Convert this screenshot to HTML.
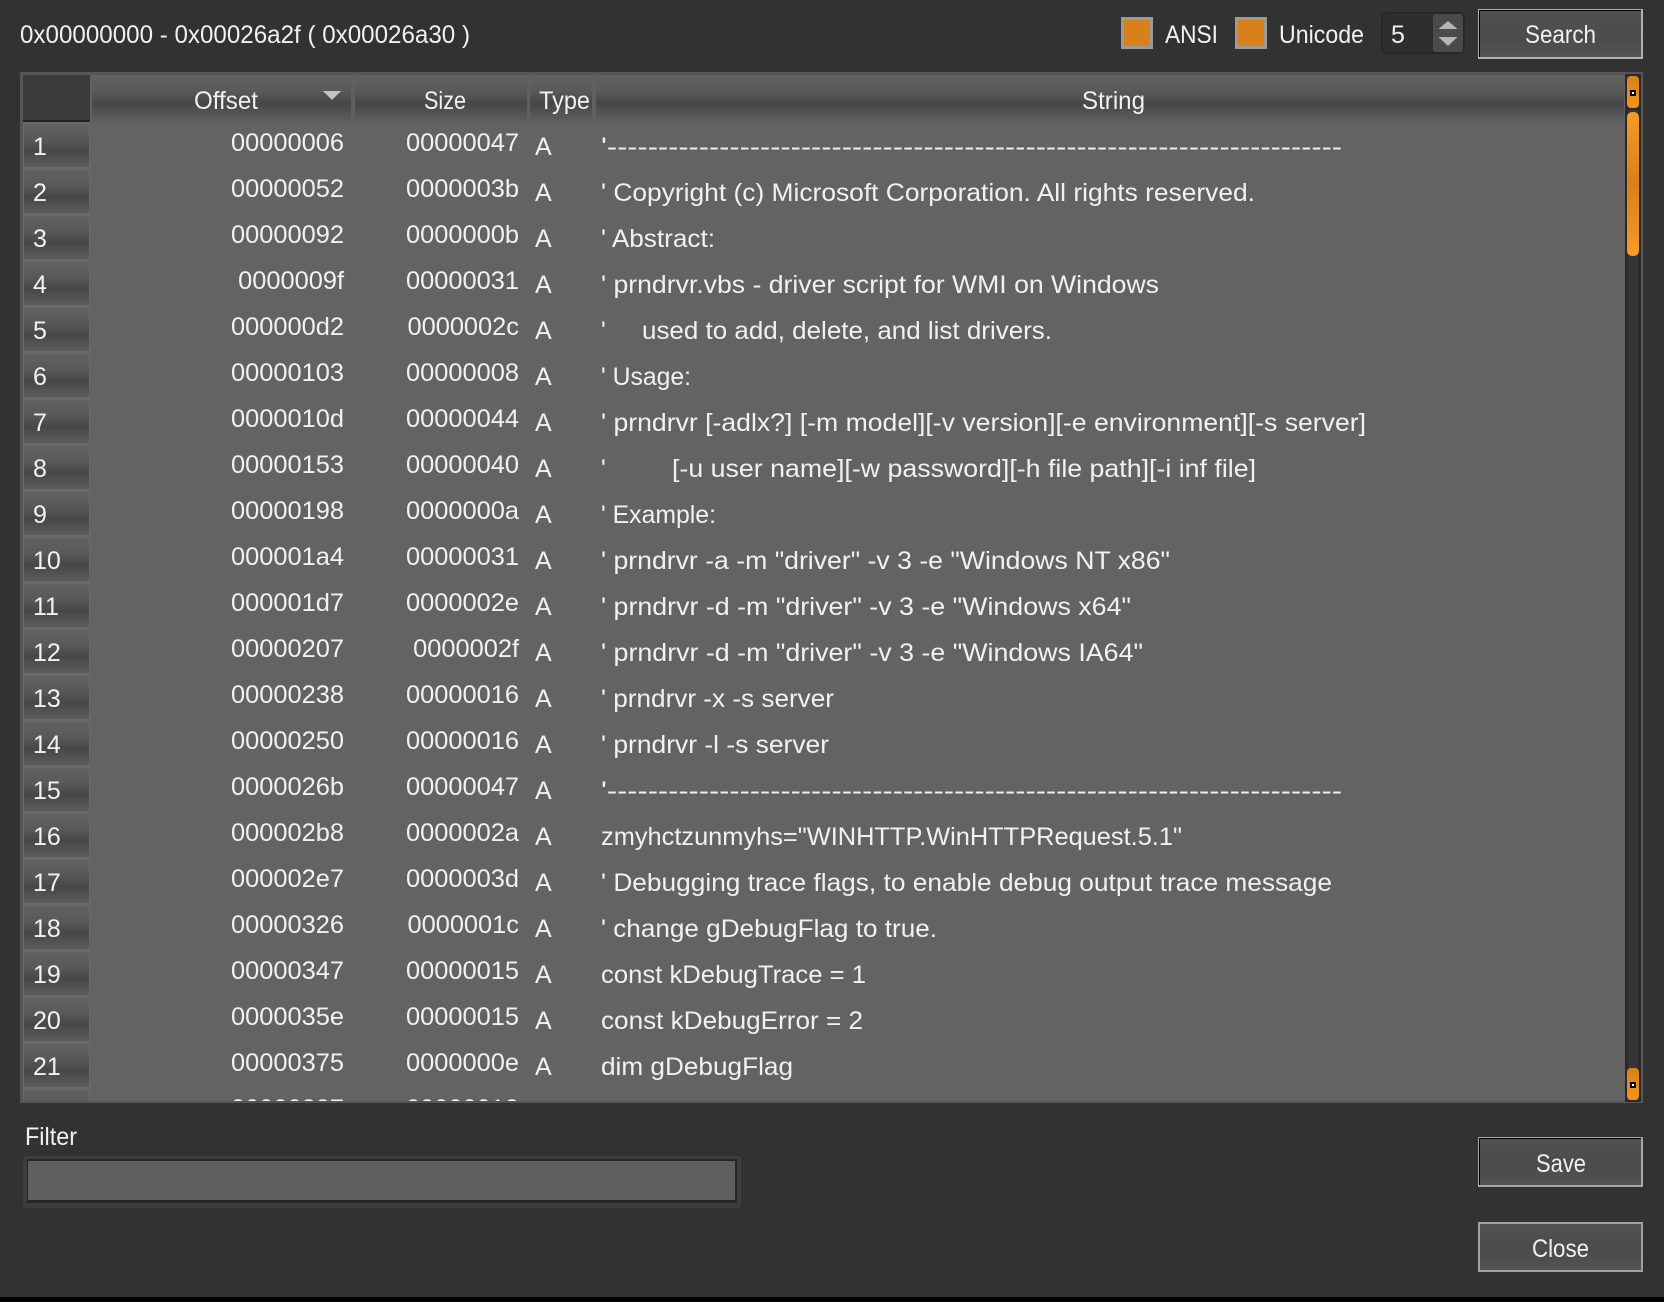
<!DOCTYPE html>
<html><head><meta charset="utf-8"><title>Strings</title>
<style>
html,body{margin:0;padding:0;background:#323232;width:1664px;height:1302px;overflow:hidden}
svg{display:block}
text{font-family:"Liberation Sans",sans-serif;font-size:25px;fill:#f1f1f1;white-space:pre}
.o,.s{text-anchor:end;font-size:25.4px}
</style></head><body>
<svg width="1664" height="1302" viewBox="0 0 1664 1302" xmlns="http://www.w3.org/2000/svg">
<defs>
<linearGradient id="h" x1="0" y1="0" x2="0" y2="1"><stop offset="0" stop-color="#626262"/><stop offset=".35" stop-color="#595959"/><stop offset=".62" stop-color="#474747"/><stop offset="1" stop-color="#5c5c5c"/></linearGradient>
<linearGradient id="b" x1="0" y1="0" x2="0" y2="1"><stop offset="0" stop-color="#515151"/><stop offset=".6" stop-color="#4b4b4b"/><stop offset="1" stop-color="#535353"/></linearGradient>
<linearGradient id="t" x1="0" y1="0" x2="0" y2="1"><stop offset="0" stop-color="#f79b26"/><stop offset=".5" stop-color="#d87f1a"/><stop offset="1" stop-color="#f79b26"/></linearGradient>
<linearGradient id="a" x1="0" y1="0" x2="0" y2="1"><stop offset="0" stop-color="#d8801a"/><stop offset="1" stop-color="#f2951f"/></linearGradient>
<clipPath id="tb"><rect x="22" y="122" width="1604" height="979"/></clipPath>
</defs>
<rect width="1664" height="1302" fill="#323232"/>
<rect y="1297" width="1664" height="5" fill="#000"/>

<!-- top bar -->
<text x="20" y="43" textLength="450" lengthAdjust="spacingAndGlyphs">0x00000000 - 0x00026a2f ( 0x00026a30 )</text>
<rect x="1122.500" y="18.500" width="29" height="29" fill="#d8801a" stroke="#9a9a9a" stroke-width="3"/>
<text x="1165" y="43" textLength="53" lengthAdjust="spacingAndGlyphs">ANSI</text>
<rect x="1236.500" y="18.500" width="29" height="29" fill="#d8801a" stroke="#9a9a9a" stroke-width="3"/>
<text x="1279" y="43" textLength="85" lengthAdjust="spacingAndGlyphs">Unicode</text>
<rect x="1382" y="13" width="82" height="40" rx="6" fill="#2e2e2e" stroke="#272727" stroke-width="2"/>
<rect x="1433" y="14" width="30" height="38" rx="3" fill="#4a4a4a"/>
<path d="M1448 21l9.500 8h-19z" fill="#b5b5b5"/><path d="M1438.500 37h19l-9.500 9z" fill="#b5b5b5"/>
<text x="1391" y="43">5</text>

<rect x="1478" y="9" width="165" height="50" fill="#b0b0b0"/><rect x="1479" y="10" width="162" height="47" fill="#000"/><rect x="1480" y="11" width="161" height="46" fill="url(#b)"/>
<text x="1525" y="43" textLength="71" lengthAdjust="spacingAndGlyphs">Search</text>

<!-- table -->
<rect x="20" y="72" width="1623" height="1031" fill="#565656"/>
<rect x="23" y="75" width="1603" height="1026" fill="#636363"/>
<rect x="23" y="75" width="67" height="46" fill="#3c3c3c"/><rect x="23" y="120" width="67" height="2" fill="#242424"/>
<rect x="90" y="75" width="1536" height="47" fill="#606060"/>
<rect x="92" y="76" width="259" height="44" fill="url(#h)"/>
<rect x="355" y="76" width="172" height="44" fill="url(#h)"/>
<rect x="530" y="76" width="62" height="44" fill="url(#h)"/>
<rect x="596" y="76" width="1028" height="44" fill="url(#h)"/>
<path d="M323 91h18l-9 9z" fill="#c4c4c4"/>
<text x="194" y="109" textLength="64" lengthAdjust="spacingAndGlyphs">Offset</text>
<text x="424" y="109" textLength="42" lengthAdjust="spacingAndGlyphs">Size</text>
<text x="539" y="109" textLength="51" lengthAdjust="spacingAndGlyphs">Type</text>
<text x="1082" y="109" textLength="63" lengthAdjust="spacingAndGlyphs">String</text>

<g clip-path="url(#tb)">
<rect x="23" y="122" width="67" height="980" fill="#696969"/>
<rect x="24" y="124" width="65" height="43" fill="url(#h)"/><rect x="24" y="170" width="65" height="43" fill="url(#h)"/><rect x="24" y="216" width="65" height="43" fill="url(#h)"/><rect x="24" y="262" width="65" height="43" fill="url(#h)"/><rect x="24" y="308" width="65" height="43" fill="url(#h)"/><rect x="24" y="354" width="65" height="43" fill="url(#h)"/><rect x="24" y="400" width="65" height="43" fill="url(#h)"/><rect x="24" y="446" width="65" height="43" fill="url(#h)"/><rect x="24" y="492" width="65" height="43" fill="url(#h)"/><rect x="24" y="538" width="65" height="43" fill="url(#h)"/><rect x="24" y="584" width="65" height="43" fill="url(#h)"/><rect x="24" y="630" width="65" height="43" fill="url(#h)"/><rect x="24" y="676" width="65" height="43" fill="url(#h)"/><rect x="24" y="722" width="65" height="43" fill="url(#h)"/><rect x="24" y="768" width="65" height="43" fill="url(#h)"/><rect x="24" y="814" width="65" height="43" fill="url(#h)"/><rect x="24" y="860" width="65" height="43" fill="url(#h)"/><rect x="24" y="906" width="65" height="43" fill="url(#h)"/><rect x="24" y="952" width="65" height="43" fill="url(#h)"/><rect x="24" y="998" width="65" height="43" fill="url(#h)"/><rect x="24" y="1044" width="65" height="43" fill="url(#h)"/><rect x="24" y="1090" width="65" height="43" fill="url(#h)"/>

<text x="33" y="155">1</text><text x="33" y="201">2</text><text x="33" y="247">3</text><text x="33" y="293">4</text><text x="33" y="339">5</text><text x="33" y="385">6</text><text x="33" y="431">7</text><text x="33" y="477">8</text><text x="33" y="523">9</text><text x="33" y="569">10</text><text x="33" y="615">11</text><text x="33" y="661">12</text><text x="33" y="707">13</text><text x="33" y="753">14</text><text x="33" y="799">15</text><text x="33" y="845">16</text><text x="33" y="891">17</text><text x="33" y="937">18</text><text x="33" y="983">19</text><text x="33" y="1029">20</text><text x="33" y="1075">21</text>

<text class="o" x="344" y="151">00000006</text><text class="s" x="519" y="151">00000047</text>
<text class="o" x="344" y="197">00000052</text><text class="s" x="519" y="197">0000003b</text>
<text class="o" x="344" y="243">00000092</text><text class="s" x="519" y="243">0000000b</text>
<text class="o" x="344" y="289">0000009f</text><text class="s" x="519" y="289">00000031</text>
<text class="o" x="344" y="335">000000d2</text><text class="s" x="519" y="335">0000002c</text>
<text class="o" x="344" y="381">00000103</text><text class="s" x="519" y="381">00000008</text>
<text class="o" x="344" y="427">0000010d</text><text class="s" x="519" y="427">00000044</text>
<text class="o" x="344" y="473">00000153</text><text class="s" x="519" y="473">00000040</text>
<text class="o" x="344" y="519">00000198</text><text class="s" x="519" y="519">0000000a</text>
<text class="o" x="344" y="565">000001a4</text><text class="s" x="519" y="565">00000031</text>
<text class="o" x="344" y="611">000001d7</text><text class="s" x="519" y="611">0000002e</text>
<text class="o" x="344" y="657">00000207</text><text class="s" x="519" y="657">0000002f</text>
<text class="o" x="344" y="703">00000238</text><text class="s" x="519" y="703">00000016</text>
<text class="o" x="344" y="749">00000250</text><text class="s" x="519" y="749">00000016</text>
<text class="o" x="344" y="795">0000026b</text><text class="s" x="519" y="795">00000047</text>
<text class="o" x="344" y="841">000002b8</text><text class="s" x="519" y="841">0000002a</text>
<text class="o" x="344" y="887">000002e7</text><text class="s" x="519" y="887">0000003d</text>
<text class="o" x="344" y="933">00000326</text><text class="s" x="519" y="933">0000001c</text>
<text class="o" x="344" y="979">00000347</text><text class="s" x="519" y="979">00000015</text>
<text class="o" x="344" y="1025">0000035e</text><text class="s" x="519" y="1025">00000015</text>
<text class="o" x="344" y="1071">00000375</text><text class="s" x="519" y="1071">0000000e</text>
<text class="o" x="344" y="1117">00000387</text><text class="s" x="519" y="1117">00000013</text>

<text x="535" y="155">A</text><text x="535" y="201">A</text><text x="535" y="247">A</text><text x="535" y="293">A</text><text x="535" y="339">A</text><text x="535" y="385">A</text><text x="535" y="431">A</text><text x="535" y="477">A</text><text x="535" y="523">A</text><text x="535" y="569">A</text><text x="535" y="615">A</text><text x="535" y="661">A</text><text x="535" y="707">A</text><text x="535" y="753">A</text><text x="535" y="799">A</text><text x="535" y="845">A</text><text x="535" y="891">A</text><text x="535" y="937">A</text><text x="535" y="983">A</text><text x="535" y="1029">A</text><text x="535" y="1075">A</text>

<text x="601" y="155" textLength="741" lengthAdjust="spacingAndGlyphs">'------------------------------------------------------------------------</text>
<text x="601" y="201" textLength="654" lengthAdjust="spacingAndGlyphs">' Copyright (c) Microsoft Corporation. All rights reserved.</text>
<text x="601" y="247" textLength="114" lengthAdjust="spacingAndGlyphs">' Abstract:</text>
<text x="601" y="293" textLength="558" lengthAdjust="spacingAndGlyphs">' prndrvr.vbs - driver script for WMI on Windows</text>
<text x="601" y="339">'</text><text x="642" y="339" textLength="410" lengthAdjust="spacingAndGlyphs">used to add, delete, and list drivers.</text>
<text x="601" y="385" textLength="90" lengthAdjust="spacingAndGlyphs">' Usage:</text>
<text x="601" y="431" textLength="765" lengthAdjust="spacingAndGlyphs">' prndrvr [-adlx?] [-m model][-v version][-e environment][-s server]</text>
<text x="601" y="477">'</text><text x="672" y="477" textLength="584" lengthAdjust="spacingAndGlyphs">[-u user name][-w password][-h file path][-i inf file]</text>
<text x="601" y="523" textLength="115" lengthAdjust="spacingAndGlyphs">' Example:</text>
<text x="601" y="569" textLength="569" lengthAdjust="spacingAndGlyphs">' prndrvr -a -m "driver" -v 3 -e "Windows NT x86"</text>
<text x="601" y="615" textLength="530" lengthAdjust="spacingAndGlyphs">' prndrvr -d -m "driver" -v 3 -e "Windows x64"</text>
<text x="601" y="661" textLength="542" lengthAdjust="spacingAndGlyphs">' prndrvr -d -m "driver" -v 3 -e "Windows IA64"</text>
<text x="601" y="707" textLength="233" lengthAdjust="spacingAndGlyphs">' prndrvr -x -s server</text>
<text x="601" y="753" textLength="228" lengthAdjust="spacingAndGlyphs">' prndrvr -l -s server</text>
<text x="601" y="799" textLength="741" lengthAdjust="spacingAndGlyphs">'------------------------------------------------------------------------</text>
<text x="601" y="845" textLength="581" lengthAdjust="spacingAndGlyphs">zmyhctzunmyhs="WINHTTP.WinHTTPRequest.5.1"</text>
<text x="601" y="891" textLength="731" lengthAdjust="spacingAndGlyphs">' Debugging trace flags, to enable debug output trace message</text>
<text x="601" y="937" textLength="336" lengthAdjust="spacingAndGlyphs">' change gDebugFlag to true.</text>
<text x="601" y="983" textLength="265" lengthAdjust="spacingAndGlyphs">const kDebugTrace = 1</text>
<text x="601" y="1029" textLength="262" lengthAdjust="spacingAndGlyphs">const kDebugError = 2</text>
<text x="601" y="1075" textLength="192" lengthAdjust="spacingAndGlyphs">dim gDebugFlag</text>
</g>

<!-- scrollbar -->
<rect x="1625" y="74" width="16" height="1028" fill="#2a2a2a"/>
<rect x="1628" y="110" width="10" height="990" fill="#353535"/>
<rect x="1627" y="76" width="12" height="32" rx="4" fill="url(#a)"/>
<rect x="1630" y="90" width="6" height="6" fill="#000"/><rect x="1632" y="92" width="2" height="2" fill="#fff"/>
<rect x="1627" y="112" width="12" height="144" rx="5" fill="url(#t)"/>
<rect x="1627" y="1068" width="12" height="32" rx="4" fill="url(#a)"/>
<rect x="1630" y="1082" width="6" height="6" fill="#000"/><rect x="1632" y="1084" width="2" height="2" fill="#fff"/>

<!-- filter -->
<text x="25" y="1145" textLength="52" lengthAdjust="spacingAndGlyphs">Filter</text>
<rect x="23" y="1156" width="718" height="52" rx="3" fill="#3d3d3d"/>
<rect x="27" y="1159" width="710" height="44" fill="#262626"/>
<rect x="28" y="1161" width="707" height="39" fill="#5f5f5f"/>

<!-- buttons -->
<rect x="1478" y="1137" width="165" height="50" fill="#a8a8a8"/><rect x="1479" y="1138" width="162" height="47" fill="#000"/><rect x="1480" y="1139" width="161" height="46" fill="url(#b)"/>
<text x="1536" y="1172" textLength="50" lengthAdjust="spacingAndGlyphs">Save</text>
<rect x="1478" y="1222" width="165" height="50" fill="#a0a0a0"/><rect x="1480" y="1224" width="161" height="46" fill="url(#b)"/>
<text x="1532" y="1257" textLength="57" lengthAdjust="spacingAndGlyphs">Close</text>
</svg>
</body></html>
